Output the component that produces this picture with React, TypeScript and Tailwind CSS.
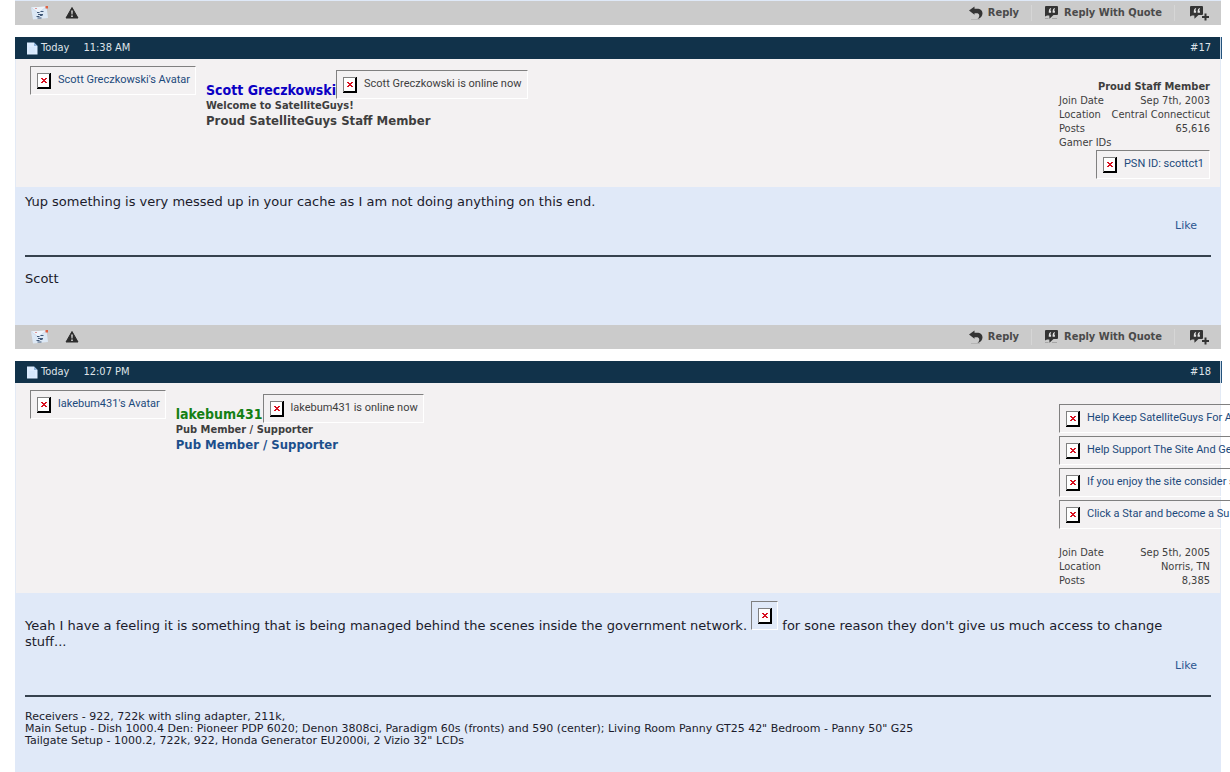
import type { ReactNode } from "react";

const narrow = "font-['DejaVu_Sans_Condensed','DejaVu_Sans',sans-serif]";

function MissingImage({
  alt,
  href,
  dark = false,
  wide = false,
}: {
  alt?: string;
  href?: string;
  dark?: boolean;
  wide?: boolean;
}) {
  const box = (
    <span
      className={`inline-flex h-[29px] shrink-0 items-start gap-[7px] border border-t-[#808080] border-r-white border-b-white border-l-[#808080] pt-[6px] pr-[5px] pl-[6px] align-top font-[Roboto,'Liberation_Sans',sans-serif] text-[11px] leading-[13px] font-normal whitespace-nowrap ${dark ? "text-[#3e3e3e]" : "text-[#1c4a7c]"} ${wide ? "w-[200px]" : ""}`}
    >
      <svg width="14" height="16" viewBox="0 0 14 16" shapeRendering="crispEdges" className="shrink-0" aria-hidden="true">
        <path d="M0 0h14v16H0z" fill="#000" />
        <path d="M0 0h13v15H0z" fill="#808080" />
        <path d="M1 1h12v14H1z" fill="#000" />
        <path d="M1 1h11v13H1z" fill="#fff" />
        <path d="M4 5h2v1H4zM8 5h2v1H8zM5 6h4v1H5zM6 7h2v1H6zM5 8h4v1H5zM4 9h2v1H4zM8 9h2v1H8z" fill="#d81020" />
      </svg>
      {alt && <span>{alt}</span>}
    </span>
  );
  return href ? (
    <a href={href} className="inline-flex">
      {box}
    </a>
  ) : (
    box
  );
}

function QuoteIcon({ plus = false }: { plus?: boolean }) {
  return (
    <svg width="20" height="16" viewBox="0 0 20 16" aria-hidden="true">
      <path d="M2 1h11q1 0 1 1v7q0 1-1 1H9.500L5.500 13.700 5.300 10.500H3L1 11.500V2q0-1 1-1z" fill="#343434" />
      <path
        d="M6.900 3Q4.800 3.700 4.800 6v1.800h2.300V5.500H6.100Q6.200 4.500 7.200 4zM10.700 3Q8.600 3.700 8.600 6v1.800h2.300V5.500h-1Q10 4.500 11 4z"
        fill="#e2e2e2"
      />
      {plus ? (
        <path d="M15.500 8.500h2V11H20v2h-2.500v2.500h-2V13H13v-2h2.500z" fill="#343434" />
      ) : (
        <path d="M1 13.500h3.500M8 13.500h5" stroke="#a5a5a5" />
      )}
    </svg>
  );
}

function PostFooter() {
  return (
    <footer
      className={`flex h-6 items-center justify-between bg-[#cbcbcb] pr-3 pl-4 text-[11px] font-bold text-[#4a4a4a] ${narrow}`}
    >
      <div className="flex items-center gap-4">
        <button type="button" aria-label="Blog this post">
          <svg width="18" height="16" viewBox="0 0 18 16" aria-hidden="true">
            <path d="M0 2.500 15.500 1.500 17 13 2 14.500z" fill="#dce8f5" />
            <path d="M0 2.500 7.500 8 15.500 1.500" fill="#eef4fb" stroke="#c6d5e8" strokeWidth=".7" />
            <path d="M6 7.500h2.500M9.500 6.500h3M7 9.500h5M5.500 11.500h3M9 10.500h2.500M6.500 13h4" stroke="#405878" strokeWidth="1" />
            <path d="M14.500 1h2.500v2.500h-2.500z" fill="#e06040" />
            <path d="M4 3h2v1H4z" fill="#d99" />
          </svg>
        </button>
        <button type="button" aria-label="Report post">
          <svg width="14" height="14" viewBox="0 0 14 14" aria-hidden="true">
            <path d="M7 1.500 13 12H1z" fill="#2c2c2c" stroke="#2c2c2c" strokeLinejoin="round" />
            <path d="M6.200 4.500h1.600l-.3 4h-1zM6.200 9.500h1.600V11H6.200z" fill="#ddd" />
          </svg>
        </button>
      </div>
      <div className="flex items-center">
        <a href="#reply" className="flex items-center gap-1 pr-3">
          <svg width="15" height="14" viewBox="0 0 15 14" aria-hidden="true">
            <path
              d="M0 4.500 5.500.5v2.300h2.600c3.400 0 5.400 2 5.400 4.700 0 2.600-2 4.700-5 5.500 1.500-1.300 2-2.700 1.700-4-.3-1.200-1.200-1.700-2.500-1.700H5.500v1.500z"
              fill="#343434"
            />
            <path d="M2 13.500h9" stroke="#b4b4b4" />
          </svg>
          Reply
        </a>
        <a href="#quote" className="flex items-center border-l border-[#d6d6d6] pr-2 pl-3">
          <QuoteIcon />
          Reply With Quote
        </a>
        <button type="button" aria-label="Multi-quote this message" className="ml-1 border-l border-[#d6d6d6] pl-[14px]">
          <QuoteIcon plus />
        </button>
      </div>
    </footer>
  );
}

type PostProps = {
  id: string;
  time: string;
  name: string;
  nameClass: string;
  title: string;
  rank: string;
  rankClass: string;
  side?: ReactNode;
  stats: [string, string][];
  sideEnd?: ReactNode;
  headClass: string;
  children: ReactNode;
};

function PostHead(p: PostProps) {
  return (
    <>
      <header
        className={`flex h-[22px] items-center justify-between border-r border-[#c4d4e4] bg-[#11324a] pr-[9px] pl-[11px] text-[11px] text-[#dfe3e8] shadow-[1px_0_0_#24527c] ${narrow}`}
      >
        <span className="flex items-center gap-[3px]">
          <svg width="12" height="13" viewBox="0 0 12 13" aria-hidden="true">
            <path d="M1 .5h7L11.500 4v8.500H1z" fill="#dcecff" />
            <path d="M8 .5 11.500 4H8z" fill="#8fb4dc" />
            <path d="M3 6h6M3 8h6M3 10h6" stroke="#cfe3fa" />
          </svg>
          <span>Today</span>
          <span className="pl-[11px]">{p.time}</span>
        </span>
        <a href={`#post${p.id}`}>#{p.id}</a>
      </header>
      <div
        className={`flex justify-between border-x border-[#e3eaf5] bg-[#f3f1f2] pr-[10px] pl-[14px] text-[#3e3e3e] ${narrow} ${p.headClass}`}
      >
        <div className="flex items-start gap-[10px] pt-[7px]">
          <MissingImage alt={`${p.name}'s Avatar`} href="#profile" />
          <div className="pt-1">
            <div className="flex items-start text-[14px] leading-[17px] font-bold">
              <a href="#profile" className={`pt-3 ${p.nameClass}`}>
                {p.name}
              </a>
              <MissingImage alt={`${p.name} is online now`} dark />
            </div>
            <div className="text-[11px] leading-[14px] font-bold">{p.title}</div>
            <div className={`text-[13px] leading-[15px] font-bold ${p.rankClass}`}>{p.rank}</div>
          </div>
        </div>
        <div className="w-[151px] pt-[21px] text-[11px] leading-[14px]">
          {p.side}
          <dl>
            {p.stats.map(([k, v]) => (
              <div key={k} className="flex justify-between whitespace-nowrap">
                <dt>{k}</dt>
                <dd>{v}</dd>
              </div>
            ))}
          </dl>
          {p.sideEnd}
        </div>
      </div>
    </>
  );
}

function Post(p: PostProps) {
  return (
    <article className="mt-3">
      <PostHead {...p} />
      {p.children}
    </article>
  );
}

function Like() {
  return (
    <div className="flex justify-end pt-2 pr-[14px] text-[11px] leading-4 text-[#2c5590]">
      <a href="#like">Like</a>
    </div>
  );
}

const banners = [
  "Help Keep SatelliteGuys For A",
  "Help Support The Site And Ge",
  "If you enjoy the site consider s",
  "Click a Star and become a Su",
];

export default function App() {
  return (
    <main className="min-h-screen overflow-hidden bg-white pr-[9px] pl-[15px] font-['DejaVu_Sans',sans-serif] text-[13px] leading-4 text-[#1b1b2b]">
      <div className="border-t border-[#dfe9f8]">
        <PostFooter />
      </div>

      <Post
        id="17"
        time="11:38 AM"
        name="Scott Greczkowski"
        nameClass="text-[#0b00c4]"
        title="Welcome to SatelliteGuys!"
        rank="Proud SatelliteGuys Staff Member"
        rankClass=""
        headClass="h-32"
        side={<div className="text-right font-bold">Proud Staff Member</div>}
        stats={[
          ["Join Date", "Sep 7th, 2003"],
          ["Location", "Central Connecticut"],
          ["Posts", "65,616"],
          ["Gamer IDs", ""],
        ]}
        sideEnd={
          <div className="flex justify-end">
            <MissingImage alt="PSN ID: scottct1" href="#psn" />
          </div>
        }
      >
        <div className="h-[138px] bg-[#e0e9f8] px-[10px] pt-[7px]">
          <p>Yup something is very messed up in your cache as I am not doing anything on this end.</p>
          <Like />
          <hr className="mt-[21px] border-t-2 border-[#36424e]" />
          <p className="pt-[14px]">Scott</p>
        </div>
        <PostFooter />
      </Post>

      <Post
        id="18"
        time="12:07 PM"
        name="lakebum431"
        nameClass="text-[#148014]"
        title="Pub Member / Supporter"
        rank="Pub Member / Supporter"
        rankClass="text-[#1c4f8c]"
        headClass="h-[210px]"
        side={
          <div className="mb-[17px] flex flex-col gap-[3px]">
            {banners.map((b) => (
              <MissingImage key={b} alt={b} href="#support" wide />
            ))}
          </div>
        }
        stats={[
          ["Join Date", "Sep 5th, 2005"],
          ["Location", "Norris, TN"],
          ["Posts", "8,385"],
        ]}
      >
        <div className="min-h-[179px] bg-[#e0e9f8] px-[10px] pt-2">
          <p className="pr-[14px]">
            Yeah I have a feeling it is something that is being managed behind the scenes inside the government network.{" "}
            <span className="inline-block overflow-hidden align-baseline">
              <MissingImage />
            </span>{" "}
            for sone reason they don't give us much access to change stuff...
          </p>
          <Like />
          <hr className="mt-[21px] border-t-2 border-[#36424e]" />
          <p className="pt-[14px] text-[11px] leading-3">
            Receivers - 922, 722k with sling adapter, 211k,
            <br />
            Main Setup - Dish 1000.4 Den: Pioneer PDP 6020; Denon 3808ci, Paradigm 60s (fronts) and 590 (center); Living Room Panny GT25 42" Bedroom - Panny 50" G25
            <br />
            Tailgate Setup - 1000.2, 722k, 922, Honda Generator EU2000i, 2 Vizio 32" LCDs
          </p>
        </div>
      </Post>
    </main>
  );
}
